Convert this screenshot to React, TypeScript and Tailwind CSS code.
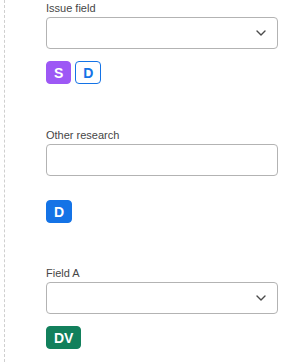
import { ReactNode } from "react";

type BadgeVariant = "purple" | "blue" | "blueOutline" | "green";

const badgeStyles: Record<BadgeVariant, string> = {
  purple: "bg-[#9d58f5] text-white border-[#9d58f5]",
  blue: "bg-[#1473e6] text-white border-[#1473e6]",
  blueOutline: "bg-white text-[#1473e6] border-[#1473e6]",
  green: "bg-[#12805c] text-white border-[#12805c]",
};

const Badge = ({ label, variant }: { label: string; variant: BadgeVariant }) => (
  <span
    className={`inline-flex h-[23px] min-w-[25px] items-center justify-center rounded-[4px] border px-[7px] text-[14px] font-bold leading-none ${badgeStyles[variant]}`}
  >
    {label}
  </span>
);

const Chevron = () => (
  <svg width="10" height="6" viewBox="0 0 10 6" fill="none" className="text-[#4b4b4b]">
    <path d="M1 1l4 4 4-4" stroke="currentColor" strokeWidth="1.4" strokeLinecap="round" strokeLinejoin="round" />
  </svg>
);

const Field = ({
  label,
  select,
  badgeGap,
  className,
  children,
}: {
  label: string;
  select?: boolean;
  badgeGap: string;
  className?: string;
  children: ReactNode;
}) => (
  <div className={className}>
    <div className="h-4 text-[11px] leading-4 text-[#464646]">{label}</div>
    <div className="mt-px flex h-8 items-center justify-end rounded-[4px] border border-[#b3b3b3] bg-white pr-[11px]">
      {select && <Chevron />}
    </div>
    <div className={`flex gap-1 ${badgeGap}`}>{children}</div>
  </div>
);

export default function App() {
  return (
    <div
      className="h-[362px] w-[290px] bg-white pl-1"
      style={{ fontFamily: "'Liberation Sans', Arial, sans-serif" }}
    >
      <div className="h-full border-l border-dashed border-[#cfcfcf] pl-[41px] pr-3">
        <Field label="Issue field" select badgeGap="mt-3">
          <Badge label="S" variant="purple" />
          <Badge label="D" variant="blueOutline" />
        </Field>
        <Field label="Other research" badgeGap="mt-6" className="mt-[43px]">
          <Badge label="D" variant="blue" />
        </Field>
        <Field label="Field A" select badgeGap="mt-3" className="mt-[42px]">
          <Badge label="DV" variant="green" />
        </Field>
      </div>
    </div>
  );
}
